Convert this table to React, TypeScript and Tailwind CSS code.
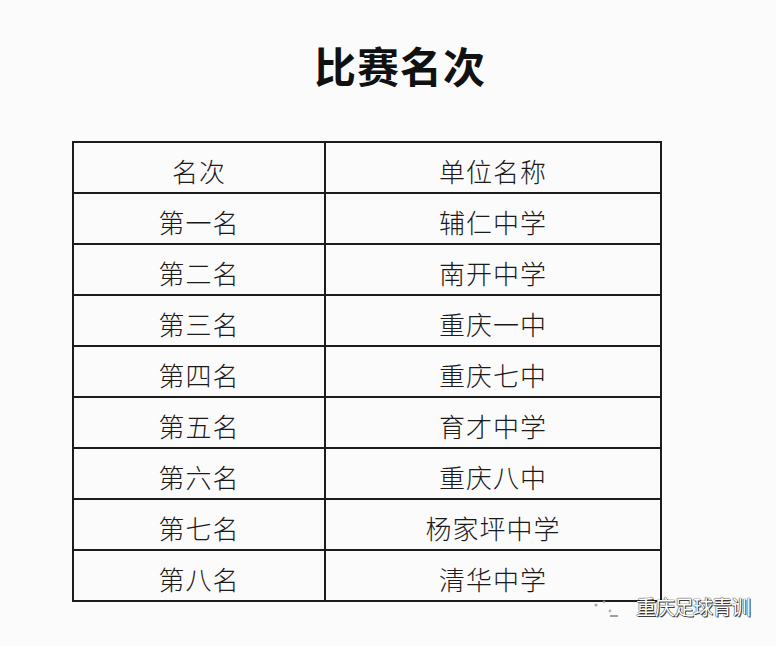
const ROWS: [string, string][] = [
  ['第一名', '辅仁中学'],
  ['第二名', '南开中学'],
  ['第三名', '重庆一中'],
  ['第四名', '重庆七中'],
  ['第五名', '育才中学'],
  ['第六名', '重庆八中'],
  ['第七名', '杨家坪中学'],
  ['第八名', '清华中学'],
];

const cell =
  'h-[51px] border-2 border-[#1c1c1c] px-0 pt-[7px] pb-0 text-center align-middle tracking-[1px]';

export default function App() {
  return (
    <div
      className="relative h-[646px] w-[776px] overflow-hidden bg-[#fcfbfc] text-[#1a1a1a]"
      style={{ fontFamily: '"Noto Sans CJK SC", "Noto Sans", sans-serif' }}
    >
      <h1 className="pt-[40px] pl-[24px] text-center text-[42px] leading-[50px] font-bold tracking-[1px] text-[#111]">
        比赛名次
      </h1>

      <table className="mt-[51px] ml-[72px] w-[590px] border-collapse text-[26px] font-light leading-none">
        <colgroup>
          <col className="w-[252px]" />
          <col />
        </colgroup>
        <tbody>
          <tr>
            <td className={cell}>名次</td>
            <td className={cell}>单位名称</td>
          </tr>
          {ROWS.map(([rank, school]) => (
            <tr key={rank}>
              <td className={cell}>{rank}</td>
              <td className={cell}>{school}</td>
            </tr>
          ))}
        </tbody>
      </table>

      {/* watermark */}
      <div className="absolute top-[596px] left-[590px] flex items-center gap-[14px]">
        <svg width="32" height="22" viewBox="0 0 32 22" className="opacity-70">
          <circle cx="6" cy="9" r="1.6" fill="#888" />
          <circle cx="14" cy="6" r="1.4" fill="#aaa" />
          <circle cx="20" cy="15" r="1.4" fill="#999" />
          <path d="M20 20h8" stroke="#777" strokeWidth="2" />
        </svg>
        <span
          className="text-[20px] leading-none font-normal tracking-[-1px] text-white"
          style={{ textShadow: '0 0 1px #222, 0 0 1px #222, 1px 1px 0 #444' }}
        >
          重庆足球青训
        </span>
      </div>
    </div>
  );
}
